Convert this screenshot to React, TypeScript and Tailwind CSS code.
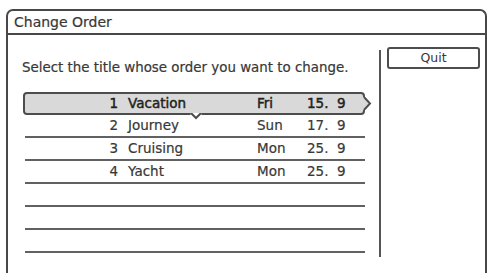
import React from "react";

const rows = [
  { n: "1", t: "Vacation", d: "Fri", dt: "15.\u00a0\u00a09" },
  { n: "2", t: "Journey", d: "Sun", dt: "17.\u00a0\u00a09" },
  { n: "3", t: "Cruising", d: "Mon", dt: "25.\u00a0\u00a09" },
  { n: "4", t: "Yacht", d: "Mon", dt: "25.\u00a0\u00a09" },
  null,
  null,
  null,
];

function RowContent({ r }: { r: { n: string; t: string; d: string; dt: string } }) {
  return (
    <div className="flex items-center h-full">
      <div className="w-[93px] text-right">{r.n}</div>
      <div className="w-[139px] pl-[10px]">{r.t}</div>
      <div className="w-[50px]">{r.d}</div>
      <div>{r.dt}</div>
    </div>
  );
}

export default function App() {
  return (
    <div
      className="w-[489px] h-[273px] bg-white overflow-hidden pt-[9px] pl-[6px] text-[#383838]"
      style={{ fontFamily: '"DejaVu Sans", sans-serif' }}
    >
      <div className="w-[481px] h-[264px] border-2 border-b-0 border-[#474747] rounded-t-[7px] flex flex-col">
        <div className="h-[24px] flex items-center pl-[6px] text-[14px] leading-none border-b-2 border-[#474747] [-webkit-text-stroke:0.2px]">
          Change Order
        </div>
        <div className="flex flex-1">
          <div className="w-[371px]">
            <div className="mt-[25px] pl-[14px] text-[13.4px] leading-[16px] [-webkit-text-stroke:0.2px]">
              Select the title whose order you want to change.
            </div>
            <div className="mt-[16px] ml-[15px] w-[342px] text-[13.5px] leading-none">
              {rows.map((r, i) =>
                i === 0 && r ? (
                  <div
                    key={i}
                    className="relative h-[23px] border-2 border-[#4d4d4d] rounded-[4px] bg-[#d9d9d9] text-[#222] [-webkit-text-stroke:0.45px]"
                  >
                    <RowContent r={r} />
                    <svg
                      className="absolute left-full top-[3px]"
                      width="9"
                      height="13"
                      viewBox="0 0 9 13"
                    >
                      <polygon points="0,0 1,0 7,6.5 1,13 0,13" fill="#d9d9d9" />
                      <polyline points="1,0 7,6.5 1,13" fill="none" stroke="#4d4d4d" strokeWidth="2" />
                    </svg>
                    <svg
                      className="absolute top-full left-[165px]"
                      width="12"
                      height="7"
                      viewBox="0 0 12 7"
                    >
                      <polygon points="0,0 12,0 12,1 6,5.5 0,1" fill="#ffffff" />
                      <polyline points="0,-1 6,5 12,-1" fill="none" stroke="#4d4d4d" strokeWidth="2" />
                    </svg>
                  </div>
                ) : (
                  <div key={i} className="h-[23px] ml-[2px] w-[340px] border-b-2 border-[#616161] [-webkit-text-stroke:0.2px]">
                    {r ? <RowContent r={r} /> : null}
                  </div>
                )
              )}
            </div>
          </div>
          <div className="w-[2px] h-[207px] mt-[15px] bg-[#555]" />
          <div className="flex-1 pt-[12px] pl-[6px]">
            <div className="w-[93px] h-[22px] border-2 border-[#4d4d4d] rounded-[3px] flex items-center justify-center text-[12.5px] leading-none">
              Quit
            </div>
          </div>
        </div>
      </div>
    </div>
  );
}
